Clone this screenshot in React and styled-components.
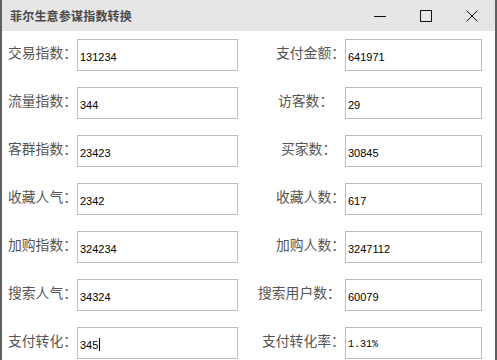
import React from "react";
import styled, { createGlobalStyle } from "styled-components";

const GlobalStyle = createGlobalStyle`
  html, body {
    margin: 0;
    padding: 0;
    background: #ffffff;
  }
  body {
    font-family: "Noto Sans CJK SC", "Noto Sans", sans-serif;
  }
`;

const rows = [
  { left: "交易指数：", lv: "131234", right: "支付金额：", rv: "641971", ri: 38 },
  { left: "流量指数：", lv: "344", right: "访客数：", rv: "29", ri: 40 },
  { left: "客群指数：", lv: "23423", right: "买家数：", rv: "30845", ri: 43 },
  { left: "收藏人气：", lv: "2342", right: "收藏人数：", rv: "617", ri: 38 },
  { left: "加购指数：", lv: "324234", right: "加购人数：", rv: "3247112", ri: 38 },
  { left: "搜索人气：", lv: "34324", right: "搜索用户数：", rv: "60079", ri: 20 },
  { left: "支付转化：", lv: "345", right: "支付转化率：", rv: "1.31%", ri: 24, caret: true, mono: true },
];

const App = () => {
  return (
    <Window>
      <GlobalStyle />
      <TitleBar>
        <Title>菲尔生意参谋指数转换</Title>
        <Controls>
          <CtrlButton>
            <svg width="12" height="12" viewBox="0 0 12 12">
              <line x1="0" y1="6.5" x2="12" y2="6.5" stroke="#111" strokeWidth="1" />
            </svg>
          </CtrlButton>
          <CtrlButton>
            <svg width="12" height="12" viewBox="0 0 12 12">
              <rect x="0.5" y="0.5" width="11" height="11" fill="none" stroke="#111" strokeWidth="1" />
            </svg>
          </CtrlButton>
          <CtrlButton>
            <svg width="12" height="12" viewBox="0 0 12 12">
              <path d="M0.5 0.5 L11.5 11.5 M11.5 0.5 L0.5 11.5" stroke="#111" strokeWidth="1" />
            </svg>
          </CtrlButton>
        </Controls>
      </TitleBar>
      <Body>
        {rows.map((r) => (
          <React.Fragment key={r.left}>
            <Label>{r.left}</Label>
            <Field>
              {r.lv}
              {r.caret && <Caret />}
            </Field>
            <Label indent={r.ri}>{r.right}</Label>
            <Field mono={r.mono}>{r.rv}</Field>
          </React.Fragment>
        ))}
      </Body>
    </Window>
  );
};

export default App;

const Window = styled.div`
  width: 497px;
  height: 360px;
  box-sizing: border-box;
  border-left: 2px solid #5f5f5f;
  border-right: 2px solid #5f5f5f;
  background: #ffffff;
  overflow: hidden;
  display: flex;
  flex-direction: column;
`;

const TitleBar = styled.div`
  height: 31px;
  background: #e6e6e6;
  display: flex;
  align-items: center;
  justify-content: space-between;
  flex-shrink: 0;
`;

const Title = styled.div`
  padding-left: 8px;
  font-size: 12px;
  font-weight: bold;
  color: #4a4a4a;
  letter-spacing: 0.2px;
`;

const Controls = styled.div`
  display: flex;
  height: 100%;
`;

const CtrlButton = styled.div`
  width: 46px;
  height: 100%;
  display: flex;
  align-items: center;
  justify-content: center;
`;

const Body = styled.div`
  display: grid;
  grid-template-columns: 69px 161px 107px 137px;
  grid-auto-rows: 32px;
  row-gap: 16px;
  padding: 8px 0 0 6px;
`;

const Label = styled.div`
  font-size: 13.8px;
  color: #555555;
  line-height: 20px;
  padding-top: 3px;
  padding-left: ${(p) => p.indent || 0}px;
  white-space: nowrap;
`;

const Field = styled.div`
  box-sizing: border-box;
  border: 1px solid #bdbdbd;
  background: #ffffff;
  display: flex;
  align-items: center;
  padding: 3px 0 0 2px;
  font-family: ${(p) => (p.mono ? `"Liberation Mono", monospace` : `"Liberation Sans", sans-serif`)};
  font-size: ${(p) => (p.mono ? "10px" : "11px")};
  color: #000000;
`;

const Caret = styled.span`
  display: inline-block;
  width: 1px;
  height: 13px;
  background: #000;
  margin-left: 1px;
`;
